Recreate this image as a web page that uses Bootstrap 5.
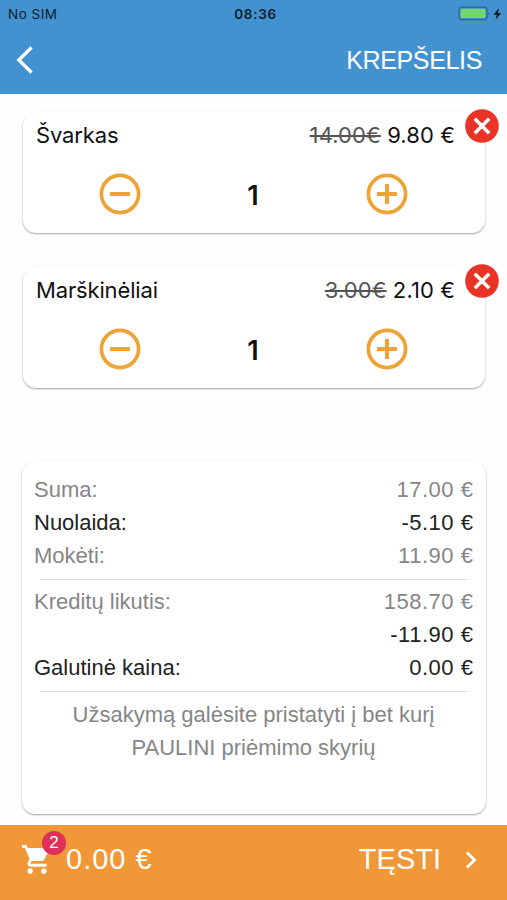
<!DOCTYPE html>
<html lang="lt">
<head>
<meta charset="utf-8">
<meta name="viewport" content="width=device-width, initial-scale=1">
<title>Krepšelis</title>
<link href="https://cdn.jsdelivr.net/npm/bootstrap@5.3.0/dist/css/bootstrap.min.css" rel="stylesheet">
<style>
  body { font-family: "Liberation Sans", Arial, sans-serif; background: #fefefe; color: #222; }
  .screen { height: 900px; overflow: hidden; }
  svg { display: block; flex-shrink: 0; }
  .topbar { height: 94px; background: #4292d0; }
  .statusbar { height: 28px; padding: 0 5px 0 8px; font: 13px/28px Inter, sans-serif; color: #10202e; }
  .carrier { font-size: 13.5px; letter-spacing: .5px; }
  .clock { font-weight: 600; font-size: 13.5px; letter-spacing: .7px; }
  .titlebar { height: 66px; padding: 0 25px 0 16px; color: #fff; font-size: 25px; letter-spacing: -.35px; }
  .titlebar svg { margin-top: -3px; }
  .items { padding: 18px 22px 0 23px; gap: 34px; }
  .panel { border: 0; border-radius: 13px; background: #fff; box-shadow: 0 1px 2px rgba(0,0,0,.36); }
  .item { height: 121px; padding: 10px 30px 0 13px; font-family: Inter, sans-serif; font-size: 22px; line-height: 27px; color: #111; }
  .item-name { letter-spacing: -.15px; }
  .new-price { letter-spacing: .1px; }
  .old-price { color: #555; text-decoration-thickness: 1.5px; }
  .stepper { height: 42px; margin: 24px 47px 0 63px; }
  .qty { font-weight: 600; font-size: 27px; padding-top: 2px; margin-left: -1px; }
  .remove { position: absolute; top: -3px; right: -13.5px; }
  .summary { height: 353px; margin: 73px 21px 0 22px; padding: 12px 13px 0 12px; font-size: 22px; line-height: 33px; color: #222; }
  .dim { color: #868686; }
  .amount { letter-spacing: .5px; margin-right: -.4px; }
  .rule { height: 1px; background: #dcdcdc; margin: 7px 6px 5px; }
  .rule-last { margin: 6.5px 6px 6px; }
  .footbar { height: 75px; padding: 0 30px 6px 22px; background: #f09837; color: #fff; font-size: 29px; }
  .total { letter-spacing: 1px; }
  .count { position: absolute; left: 20px; top: -14px; width: 24px; height: 24px; background: #de3059; font-size: 17px; line-height: 24px; }
</style>
<script src="https://cdn.jsdelivr.net/npm/bootstrap@5.3.0/dist/js/bootstrap.bundle.min.js"></script>
</head>
<body>
<div class="screen d-flex flex-column">
  <header class="topbar">
    <div class="statusbar d-flex justify-content-between position-relative">
      <span class="carrier">No SIM</span>
      <span class="clock position-absolute start-50 translate-middle-x ps-1">08:36</span>
      <svg class="align-self-center" width="44" height="16" viewBox="0 0 44 16">
        <rect x="1" y="1.2" width="28" height="12.5" rx="3" fill="none" stroke="#2867a0" stroke-width="1.3"/>
        <rect x="2.6" y="2.8" width="24.8" height="9.3" rx="1.3" fill="#70d86c"/>
        <path d="M30.3 5.5q2 2 0 4z" fill="#2867a0"/>
        <path d="M41 2 35.5 8.700h3.200L37.500 13.800 43.200 6.900h-3.400z" fill="#0b1824"/>
      </svg>
    </div>
    <div class="titlebar d-flex align-items-center justify-content-between">
      <svg width="18" height="28" viewBox="0 0 18 28"><path d="M15.500 1.500 2.800 14l12.700 12.500" fill="none" stroke="#fff" stroke-width="3.300"/></svg>
      <span>KREPŠELIS</span>
    </div>
  </header>

  <main class="flex-grow-1">
    <div class="items d-flex flex-column">
      <div class="item panel card">
        <div class="d-flex justify-content-between"><span class="item-name">Švarkas</span><span class="new-price"><del class="old-price">14.00€</del> 9.80 €</span></div>
        <div class="stepper d-flex justify-content-between align-items-center">
          <svg width="42" height="42" viewBox="0 0 42 42" fill="none" stroke="#eea337"><circle cx="21" cy="21" r="18.6" stroke-width="3.7"/><path d="M11 21h20" stroke-width="4"/></svg>
          <span class="qty">1</span>
          <svg width="42" height="42" viewBox="0 0 42 42" fill="none" stroke="#eea337"><circle cx="21" cy="21" r="18.6" stroke-width="3.7"/><path d="M11 21h20M21 11v20" stroke-width="4"/></svg>
        </div>
        <svg class="remove" width="34" height="34" viewBox="0 0 34 34"><circle cx="17" cy="17" r="16.8" fill="#e93326"/><path d="m9.8 9.8 14.4 14.4m0-14.4L9.8 24.2" stroke="#fff" stroke-width="3.5"/></svg>
      </div>
      <div class="item panel card">
        <div class="d-flex justify-content-between"><span class="item-name">Marškinėliai</span><span class="new-price"><del class="old-price">3.00€</del> 2.10 €</span></div>
        <div class="stepper d-flex justify-content-between align-items-center">
          <svg width="42" height="42" viewBox="0 0 42 42" fill="none" stroke="#eea337"><circle cx="21" cy="21" r="18.6" stroke-width="3.7"/><path d="M11 21h20" stroke-width="4"/></svg>
          <span class="qty">1</span>
          <svg width="42" height="42" viewBox="0 0 42 42" fill="none" stroke="#eea337"><circle cx="21" cy="21" r="18.6" stroke-width="3.7"/><path d="M11 21h20M21 11v20" stroke-width="4"/></svg>
        </div>
        <svg class="remove" width="34" height="34" viewBox="0 0 34 34"><circle cx="17" cy="17" r="16.8" fill="#e93326"/><path d="m9.8 9.8 14.4 14.4m0-14.4L9.8 24.2" stroke="#fff" stroke-width="3.5"/></svg>
      </div>
    </div>

    <section class="summary panel card">
      <div class="d-flex justify-content-between dim"><span>Suma:</span><span class="amount">17.00 €</span></div>
      <div class="d-flex justify-content-between"><span>Nuolaida:</span><span class="amount">-5.10 €</span></div>
      <div class="d-flex justify-content-between dim"><span>Mokėti:</span><span class="amount">11.90 €</span></div>
      <div class="rule"></div>
      <div class="d-flex justify-content-between dim"><span>Kreditų likutis:</span><span class="amount">158.70 €</span></div>
      <div class="d-flex justify-content-end"><span class="amount">-11.90 €</span></div>
      <div class="d-flex justify-content-between"><span>Galutinė kaina:</span><span class="amount">0.00 €</span></div>
      <div class="rule rule-last"></div>
      <div class="text-center dim">Užsakymą galėsite pristatyti į bet kurį<br>PAULINI priėmimo skyrių</div>
    </section>
  </main>

  <footer class="footbar d-flex align-items-center justify-content-between">
    <div class="d-flex align-items-center">
      <div class="position-relative me-3">
        <svg width="28" height="29" viewBox="1 2 20.5 20" preserveAspectRatio="none"><path fill="#fff" d="M7 18c-1.1 0-1.99.9-1.99 2S5.9 22 7 22s2-.9 2-2-.9-2-2-2zM1 2v2h2l3.600 7.590-1.350 2.450c-.16.28-.25.61-.25.96 0 1.100.9 2 2 2h12v-2H7.420c-.14 0-.25-.11-.25-.25l.03-.12.9-1.630h7.450c.75 0 1.410-.41 1.750-1.030l3.580-6.490A1 1 0 0 0 20 4H5.210l-.94-2H1zm16 16c-1.100 0-1.990.9-1.990 2s.89 2 1.990 2 2-.9 2-2-.9-2-2-2z"/></svg>
        <span class="count rounded-circle text-center">2</span>
      </div>
      <span class="total">0.00 €</span>
    </div>
    <div class="d-flex align-items-center">
      <span class="next">TĘSTI</span>
      <svg class="ms-4" width="12" height="18" viewBox="0 0 12 18"><path d="m2 1.500 7.500 7.500L2 16.500" fill="none" stroke="#fff" stroke-width="3"/></svg>
    </div>
  </footer>
</div>
</body>
</html>
